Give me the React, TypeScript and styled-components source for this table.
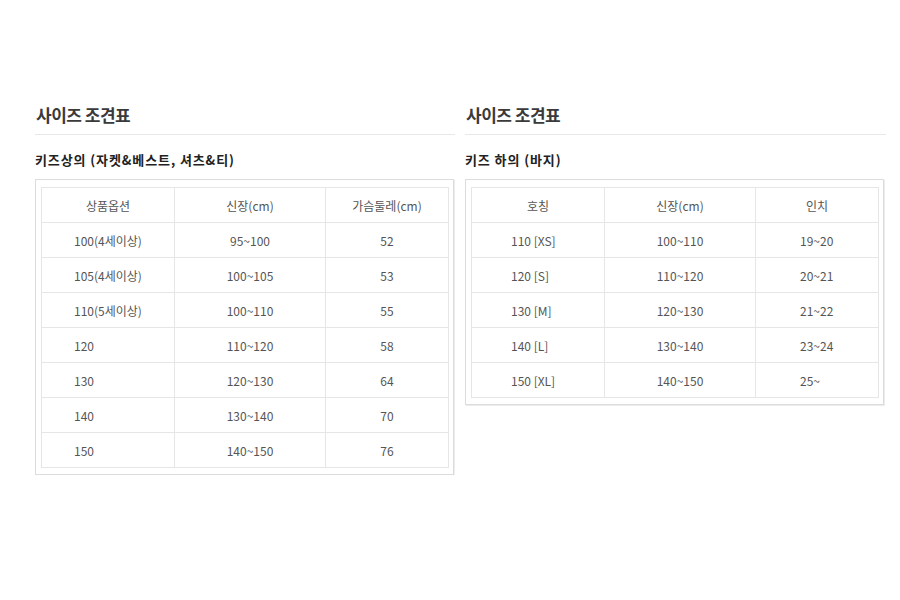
import styled, { createGlobalStyle } from 'styled-components'

type Align = 'left' | 'center'

type ColumnType = {
	label: string
	align: Align
	pad: number
}

type SizeTableType = {
	title: string
	columns: ColumnType[]
	rows: string[][]
}

const tables: SizeTableType[] = [
	{
		title: '키즈상의 (자켓&베스트, 셔츠&티)',
		columns: [
			{ label: '상품옵션', align: 'left', pad: 32 },
			{ label: '신장(cm)', align: 'center', pad: 0 },
			{ label: '가슴둘레(cm)', align: 'center', pad: 0 },
		],
		rows: [
			['100(4세이상)', '95~100', '52'],
			['105(4세이상)', '100~105', '53'],
			['110(5세이상)', '100~110', '55'],
			['120', '110~120', '58'],
			['130', '120~130', '64'],
			['140', '130~140', '70'],
			['150', '140~150', '76'],
		],
	},
	{
		title: '키즈 하의 (바지)',
		columns: [
			{ label: '호칭', align: 'left', pad: 39 },
			{ label: '신장(cm)', align: 'center', pad: 0 },
			{ label: '인치', align: 'left', pad: 44 },
		],
		rows: [
			['110 [XS]', '100~110', '19~20'],
			['120 [S]', '110~120', '20~21'],
			['130 [M]', '120~130', '21~22'],
			['140 [L]', '130~140', '23~24'],
			['150 [XL]', '140~150', '25~'],
		],
	},
]

const widths = [133, 151, 123]

export default function App() {
	return (
		<>
			<GlobalStyle />
			<Page>
				{tables.map((table) => (
					<Panel key={table.title}>
						<Title>사이즈 조견표</Title>
						<SubTitle>{table.title}</SubTitle>
						<Box>
							<Table>
								<colgroup>
									{widths.map((w, i) => (
										<col key={i} style={{ width: w }} />
									))}
								</colgroup>
								<thead>
									<tr>
										{table.columns.map((col) => (
											<HeadCell key={col.label}>{col.label}</HeadCell>
										))}
									</tr>
								</thead>
								<tbody>
									{table.rows.map((row) => (
										<tr key={row[0]}>
											{row.map((value, i) => (
												<Cell
													key={i}
													$align={table.columns[i].align}
													$pad={table.columns[i].pad}
												>
													{value}
												</Cell>
											))}
										</tr>
									))}
								</tbody>
							</Table>
						</Box>
					</Panel>
				))}
			</Page>
		</>
	)
}

const GlobalStyle = createGlobalStyle`
	body {
		margin: 0;
		background: #fff;
		font-family: 'Noto Sans CJK KR', 'Noto Sans', sans-serif;
	}
`

const Page = styled.div`
	display: grid;
	grid-template-columns: 420px 421px;
	column-gap: 10px;
	align-items: start;
	padding: 103px 0 0 35px;
`

const Panel = styled.section`
	display: flex;
	flex-direction: column;
`

const Title = styled.h2`
	margin: 0;
	padding: 0 0 7px 1px;
	font-size: 17px;
	line-height: 24px;
	font-weight: 700;
	color: #3a3a3a;
	letter-spacing: -0.5px;
	border-bottom: 1px solid #e8e8e8;
`

const SubTitle = styled.h3`
	margin: 16px 0 11px;
	font-size: 13px;
	line-height: 17px;
	font-weight: 700;
	color: #222;
	letter-spacing: 0.9px;
`

const Box = styled.div`
	width: 407px;
	padding: 7px 5px 6px 5px;
	border: 1px solid #dcdcdc;
	box-shadow: 1px 1px 0 #ececec;
`

const Table = styled.table`
	width: 407px;
	border-collapse: collapse;
	table-layout: fixed;
`

const HeadCell = styled.th`
	height: 34px;
	padding: 0;
	border: 1px solid #e6e6e6;
	font-size: 12px;
	font-weight: 400;
	color: #555;
	text-align: center;
`

const Cell = styled.td<{ $align: Align; $pad: number }>`
	height: 34px;
	padding: 0 0 0 ${(p) => p.$pad}px;
	border: 1px solid #e6e6e6;
	font-size: 12px;
	color: #555;
	text-align: ${(p) => p.$align};
`
